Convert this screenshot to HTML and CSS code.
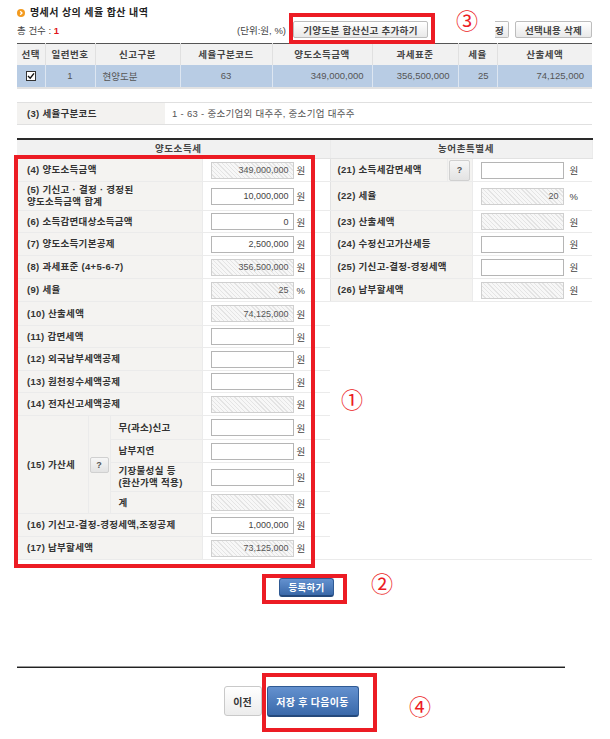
FILE: index.html
```html
<!DOCTYPE html>
<html lang="ko">
<head>
    <meta charset="utf-8">
    <title>명세서 상의 세율 합산 내역</title>
    <link rel="stylesheet" href="styles.css">
</head>
<body>
<div class="page">
    <h2 class="sec-title">
        <svg class="bullet" width="8" height="8" viewBox="0 0 8 8"><circle cx="4" cy="4" r="4" fill="#f39a1e"/><path d="M3.2 2.2 L5 4 L3.2 5.8" fill="none" stroke="#fff" stroke-width="1.3"/></svg>
        명세서 상의 세율 합산 내역
    </h2>

    <!-- 건수 / 버튼 (수정 버튼은 안내 표시에 가려 끝 글자만 보임) -->
    <div class="toolbar">
        <span class="count">총 건수 : <b>1</b></span>
        <span class="unit-note">(단위:원, %)</span>
        <button class="btn-gray w-add">기양도분 합산신고 추가하기</button>
        <button class="btn-gray frag">정</button>
        <button class="btn-gray w-sel">선택내용 삭제</button>
    </div>

    <table class="list">
        <colgroup>
            <col style="width:28px"><col style="width:50px"><col style="width:85px"><col style="width:92px">
            <col style="width:100px"><col style="width:86px"><col style="width:39px"><col style="width:95px">
        </colgroup>
        <tr>
            <th>선택</th><th>일련번호</th><th>신고구분</th><th>세율구분코드</th>
            <th>양도소득금액</th><th>과세표준</th><th>세율</th><th>산출세액</th>
        </tr>
        <tr class="sel">
            <td><span class="chk"><svg width="8" height="8" viewBox="0 0 8 8"><path d="M1 4 L3.2 6.2 L7 1.4" fill="none" stroke="#111" stroke-width="1.4"/></svg></span></td>
            <td>1</td>
            <td class="l">현양도분</td>
            <td>63</td>
            <td class="r">349,000,000</td>
            <td class="r">356,500,000</td>
            <td class="r">25</td>
            <td class="r">74,125,000</td>
        </tr>
    </table>

    <table class="code">
        <tr>
            <th>(3) 세율구분코드</th>
            <td>1 - 63 - 중소기업외 대주주, 중소기업 대주주</td>
        </tr>
    </table>

    <!-- 양도소득세 / 농어촌특별세 -->
    <table class="calc">
        <colgroup>
            <col style="width:71px"><col style="width:22px"><col style="width:92px"><col style="width:128px">
            <col style="width:117px"><col style="width:25px"><col style="width:120px">
        </colgroup>
        <tr class="head">
            <th colspan="4">양도소득세</th>
            <th colspan="3" class="sep">농어촌특별세</th>
        </tr>
        <tr class="r23">
            <th colspan="3">(4) 양도소득금액</th>
            <td class="val"><input class="ro" value="349,000,000" readonly><span class="u">원</span></td>
            <th class="rl sep">(21) 소득세감면세액</th>
            <th class="q"><button class="qbtn tall">?</button></th>
            <td class="val rv"><input value=""><span class="u">원</span></td>
        </tr>
        <tr class="r29">
            <th colspan="3">(5) 기신고 · 결정 · 경정된<br>양도소득금액 합계</th>
            <td class="val"><input value="10,000,000"><span class="u">원</span></td>
            <th class="rl sep" colspan="2">(22) 세율</th>
            <td class="val rv"><input class="ro" value="20" readonly><span class="u">%</span></td>
        </tr>
        <tr class="r22">
            <th colspan="3">(6) 소득감면대상소득금액</th>
            <td class="val"><input value="0"><span class="u">원</span></td>
            <th class="rl sep" colspan="2">(23) 산출세액</th>
            <td class="val rv"><input class="ro" value="" readonly><span class="u">원</span></td>
        </tr>
        <tr class="r23">
            <th colspan="3">(7) 양도소득기본공제</th>
            <td class="val"><input value="2,500,000"><span class="u">원</span></td>
            <th class="rl sep" colspan="2">(24) 수정신고가산세등</th>
            <td class="val rv"><input value=""><span class="u">원</span></td>
        </tr>
        <tr class="r23">
            <th colspan="3">(8) 과세표준 (4+5-6-7)</th>
            <td class="val"><input class="ro" value="356,500,000" readonly><span class="u">원</span></td>
            <th class="rl sep" colspan="2">(25) 기신고-결정-경정세액</th>
            <td class="val rv"><input value=""><span class="u">원</span></td>
        </tr>
        <tr class="r23">
            <th colspan="3">(9) 세율</th>
            <td class="val"><input class="ro" value="25" readonly><span class="u">%</span></td>
            <th class="rl sep" colspan="2">(26) 납부할세액</th>
            <td class="val rv"><input class="ro" value="" readonly><span class="u">원</span></td>
        </tr>
        <tr class="r24">
            <th colspan="3">(10) 산출세액</th>
            <td class="val"><input class="ro" value="74,125,000" readonly><span class="u">원</span></td>
            <td class="blank" colspan="3" rowspan="11"></td>
        </tr>
        <tr class="r22">
            <th colspan="3">(11) 감면세액</th>
            <td class="val"><input value=""><span class="u">원</span></td>
        </tr>
        <tr class="r23">
            <th colspan="3">(12) 외국납부세액공제</th>
            <td class="val"><input value=""><span class="u">원</span></td>
        </tr>
        <tr class="r22">
            <th colspan="3">(13) 원천징수세액공제</th>
            <td class="val"><input value=""><span class="u">원</span></td>
        </tr>
        <tr class="r23">
            <th colspan="3">(14) 전자신고세액공제</th>
            <td class="val"><input class="ro" value="" readonly><span class="u">원</span></td>
        </tr>
        <tr class="r24">
            <th rowspan="4">(15) 가산세</th>
            <th rowspan="4" class="q"><button class="qbtn">?</button></th>
            <th class="sub">무(과소)신고</th>
            <td class="val"><input value=""><span class="u">원</span></td>
        </tr>
        <tr class="r23">
            <th class="sub">납부지연</th>
            <td class="val"><input value=""><span class="u">원</span></td>
        </tr>
        <tr class="r29">
            <th class="sub">기장불성실 등<br>(환산가액 적용)</th>
            <td class="val"><input value=""><span class="u">원</span></td>
        </tr>
        <tr class="r22">
            <th class="sub">계</th>
            <td class="val"><input class="ro" value="" readonly><span class="u">원</span></td>
        </tr>
        <tr class="r23">
            <th colspan="3">(16) 기신고-결정-경정세액,조정공제</th>
            <td class="val"><input value="1,000,000"><span class="u">원</span></td>
        </tr>
        <tr class="r23">
            <th colspan="3">(17) 납부할세액</th>
            <td class="val"><input class="ro" value="73,125,000" readonly><span class="u">원</span></td>
        </tr>
    </table>

    <div class="reg">
        <button class="btn-blue small">등록하기</button>
    </div>

    <div class="foot">
        <button class="btn-white">이전</button>
        <button class="btn-blue big">저장 후 다음이동</button>
    </div>

    <!-- 안내 표시 -->
    <div class="mark box-add"></div>
    <span class="num n3">③</span>
    <div class="mark box-form"></div>
    <span class="num n1">①</span>
    <div class="mark box-reg"></div>
    <span class="num n2">②</span>
    <div class="mark box-next"></div>
    <span class="num n4">④</span>
</div>
</body>
</html>
```

FILE: styles.css
```css
* {
    box-sizing: border-box;
}
body {
    margin: 0;
    background: #fff;
    font-family: "Liberation Sans", "Noto Sans CJK KR", sans-serif;
    font-size: 9.5px;
    color: #333;
}
.page {
    position: relative;
    width: 610px;
    height: 739px;
    padding: 6px 18px 0 17px;
}
.sec-title {
    margin: 0;
    height: 14px;
    line-height: 14px;
    font-size: 10px;
    font-weight: bold;
    color: #222;
    display: flex;
    align-items: center;
    gap: 5px;
    letter-spacing: 0.4px;
}
/* toolbar with count and buttons */
.toolbar {
    margin-top: 1px;
    height: 17px;
    display: flex;
    align-items: center;
}
.count {
    color: #444;
}
.count b {
    color: #e0141c;
}
.unit-note {
    margin-left: auto;
    margin-right: 7px;
    color: #444;
}
button {
    font-family: "Liberation Sans", "Noto Sans CJK KR", sans-serif;
    font-weight: bold;
    cursor: pointer;
    padding: 0;
}
.btn-gray {
    height: 17px;
    font-size: 9.5px;
    color: #444;
    background: linear-gradient(#fff, #e9e9e9);
    border: 1px solid #bdbdbd;
    border-radius: 2px;
    letter-spacing: 0.3px;
}
.w-add {
    width: 135px;
}
.frag {
    width: 14px;
    margin-left: 67px;
    border-left: none;
    border-radius: 0 2px 2px 0;
    text-align: left;
}
.w-sel {
    width: 77px;
    margin-left: 6px;
}
/* summary list table */
.list {
    width: 575px;
    margin-top: 5px;
    border-collapse: collapse;
    table-layout: fixed;
    border-top: 1px solid #555;
    border-bottom: 2px solid #e2e2e2;
}
.list th {
    height: 21px;
    background: #f1f1f1;
    font-weight: bold;
    color: #444;
    border-left: 1px solid #e0e0e0;
    letter-spacing: 0.5px;
}
.list th:first-child, .list td:first-child {
    border-left: none;
}
.list td {
    height: 23px;
    background: #b8cce4;
    color: #555;
    text-align: center;
    border-left: 1px solid #dde6f1;
}
.list td.l {
    text-align: left;
    padding-left: 7px;
}
.list td.r {
    text-align: right;
    padding-right: 8px;
}
.chk {
    display: inline-block;
    width: 10px;
    height: 10px;
    border: 1px solid #333;
    background: #fff;
    vertical-align: middle;
    line-height: 0;
}
/* tax rate code row */
.code {
    width: 575px;
    margin-top: 13px;
    border-collapse: collapse;
    border-top: 1px solid #e0e0e0;
    border-bottom: 1px solid #e0e0e0;
}
.code th {
    width: 148px;
    height: 22px;
    background: #f3f2f0;
    text-align: left;
    padding-left: 10px;
    font-weight: bold;
    letter-spacing: 0.3px;
}
.code td {
    padding-left: 7px;
    color: #555;
    letter-spacing: 0.3px;
}
/* main calculation table */
.calc {
    width: 575px;
    margin-top: 13px;
    border-collapse: collapse;
    table-layout: fixed;
    border-top: 2px solid #2a2a2a;
}
.calc th, .calc td {
    padding: 0;
    border-bottom: 1px solid #ebebeb;
}
.calc .head th {
    height: 20px;
    background: #f1f1f1;
    text-align: center;
    color: #444;
    letter-spacing: 0.6px;
    border-bottom: 1px solid #e2e2e2;
}
.calc th {
    background: #f4f3f1;
    text-align: left;
    padding-left: 10px;
    font-weight: bold;
    color: #333;
    line-height: 12px;
    letter-spacing: 0.3px;
    border-right: 1px solid #ebebeb;
}
.calc th.rl {
    padding-left: 7px;
}
.calc th.sub {
    padding-left: 8px;
}
.calc th.q {
    padding: 0;
    text-align: center;
}
.calc .sep {
    border-left: 1px solid #e2e2e2;
}
.calc td.val {
    padding-left: 8px;
    background: #fff;
    white-space: nowrap;
}
.calc td.blank {
    background: #fff;
    border-left: none;
}
.r21 { height: 21px; }
.r22 { height: 22px; }
.r23 { height: 23px; }
.r24 { height: 24px; }
.r28 { height: 28px; }
.r29 { height: 29px; }
.val input {
    width: 83px;
    height: 17px;
    border: 1px solid #b5b5b5;
    background: #fff;
    font-family: "Liberation Sans", sans-serif;
    font-size: 9px;
    color: #444;
    text-align: right;
    padding: 0 4px 0 0;
    vertical-align: middle;
}
.val input.ro {
    border-color: #cfcfcf;
    background: repeating-linear-gradient(45deg, #f7f7f7 0 2px, #e4e4e4 2px 3px);
    color: #555;
}
.u {
    margin-left: 3px;
    vertical-align: middle;
    color: #444;
}
.rv .u {
    margin-left: 6px;
}
.qbtn {
    width: 19px;
    height: 16px;
    font-size: 9px;
    color: #555;
    background: linear-gradient(#f6f6f6, #e3e3e3);
    border: 1px solid #d0d0d0;
    border-radius: 2px;
}
.qbtn.tall {
    width: 21px;
    height: 21px;
}
/* bottom buttons */
.reg {
    margin-top: 18px;
    padding-left: 4px;
    text-align: center;
}
.btn-blue {
    color: #fff;
    background: linear-gradient(#6491cf, #3a69aa);
    border: 1px solid #2f5a94;
    border-bottom: 2px solid #24497c;
    border-radius: 3px;
    letter-spacing: 0.3px;
}
.btn-blue.small {
    width: 55px;
    height: 19px;
    font-size: 9.5px;
}
.btn-blue.big {
    width: 92px;
    height: 31px;
    font-size: 10px;
}
.foot {
    width: 548px;
    margin-top: 70px;
    border-top: 1px solid #222;
    box-shadow: 0 -1px 0 #999;
    padding-top: 18px;
    display: flex;
    justify-content: center;
    gap: 5px;
}
.btn-white {
    width: 38px;
    height: 30px;
    font-size: 10px;
    color: #333;
    background: linear-gradient(#fff, #ececec);
    border: 1px solid #c9c9c9;
    border-radius: 3px;
}
/* annotation marks over the screen */
.mark {
    position: absolute;
    border: 4px solid #ec1c24;
}
.box-add { left: 289px; top: 13px; width: 146px; height: 31px; }
.box-form { left: 14px; top: 155px; width: 301px; height: 413px; }
.box-reg { left: 262px; top: 574px; width: 85px; height: 30px; }
.box-next { left: 262px; top: 673px; width: 115px; height: 59px; }
.num {
    position: absolute;
    width: 22px;
    height: 22px;
    font-family: "Noto Sans CJK KR", sans-serif;
    font-size: 22px;
    line-height: 22px;
    text-align: center;
    color: #ec1c24;
}
.n3 { left: 456px; top: 8px; }
.n1 { left: 341px; top: 387px; }
.n2 { left: 371px; top: 571px; }
.n4 { left: 409px; top: 694px; }
```
